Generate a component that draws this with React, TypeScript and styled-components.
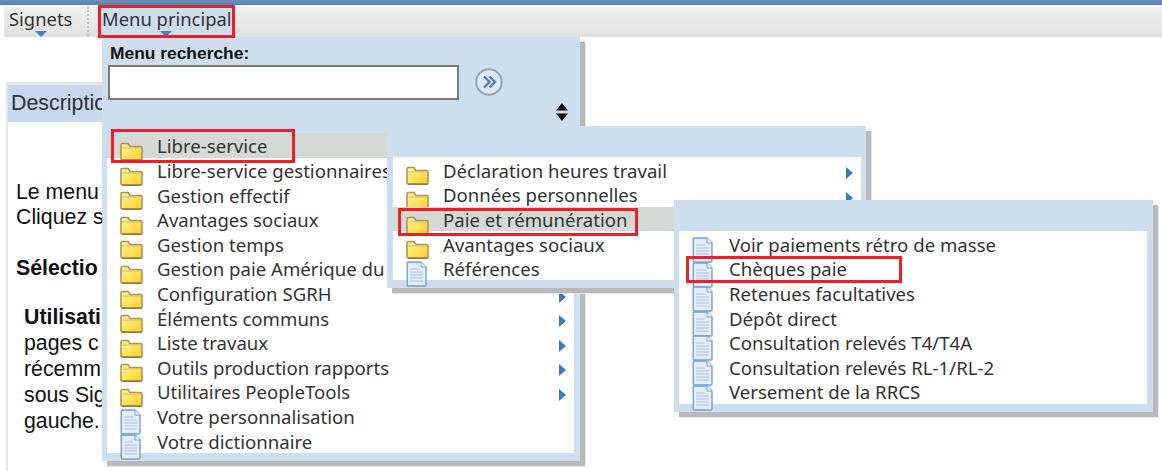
import React from "react";
import styled, { createGlobalStyle } from "styled-components";

const Global = createGlobalStyle`
  html, body { margin: 0; padding: 0; background: #fff; }
  body { font-family: "Liberation Sans", Arial, sans-serif; color: #222; }
`;

const Page = styled.div`
  position: relative;
  width: 1162px;
  height: 471px;
  overflow: hidden;
  background: #fff;
`;
const TopBar = styled.div`
  height: 5px;
  background: linear-gradient(#6b90ba, #5c82ad);
  border-bottom: 1px solid #fff;
`;
const Toolbar = styled.nav`
  display: flex;
  align-items: stretch;
  height: 31px;
  margin-left: 4px;
  background: linear-gradient(#f0f0f0, #e0e0e0);
  font-family: "Noto Sans", sans-serif;
  font-size: 18.4px;
  color: #333;
`;
const ToolItem = styled.div<{ $active?: boolean; $w: number; $pad: number; $ax: number }>`
  position: relative;
  box-sizing: border-box;
  width: ${(p) => p.$w}px;
  padding: 0 0 0 ${(p) => p.$pad}px;
  line-height: 26px;
  white-space: nowrap;
  background: ${(p) => (p.$active ? "#cddeee" : "transparent")};
  &::after {
    content: "";
    position: absolute;
    left: ${(p) => p.$ax}px;
    bottom: 0;
    border-left: 6px solid transparent;
    border-right: 6px solid transparent;
    border-top: 6px solid #4a82c0;
  }
`;
const ToolSep = styled.div`
  width: 0;
  margin: 1px 11px 1px 0;
  border-left: 2px dotted #c4c4c4;
`;
const Card = styled.section`
  box-sizing: border-box;
  width: 96px;
  height: 389px;
  margin: 45px 0 0 6px;
  overflow: hidden;
  border-left: 2px solid #e6e6e6;
  border-top: 3px solid #e6e6e6;
`;
const CardHead = styled.h2`
  margin: 0;
  height: 37px;
  padding-left: 3px;
  background: #c6d9ee;
  font-weight: 400;
  font-size: 21.4px;
  line-height: 37px;
  color: #333;
  white-space: nowrap;
`;
const CardBody = styled.div`
  padding: 58px 0 0 8px;
  font-size: 21.3px;
  line-height: 25px;
  color: #111;
  white-space: nowrap;
`;
const Para = styled.p<{ $gap?: number }>`
  margin: 0 0 ${(p) => p.$gap ?? 0}px;
`;
const ParaGroup = styled.div`
  margin: 0 0 0 8px;
  line-height: 26px;
`;
const Panel = styled.div<{ $l: number; $t: number; $w: number; $h: number; $pl: number; $pr: number }>`
  position: absolute;
  left: ${(p) => p.$l}px;
  top: ${(p) => p.$t}px;
  width: ${(p) => p.$w}px;
  height: ${(p) => p.$h}px;
  box-sizing: border-box;
  display: flex;
  flex-direction: column;
  padding: 0 ${(p) => p.$pr}px 8px ${(p) => p.$pl}px;
  background: #cddeee;
  box-shadow: 5px 5px 0 #b9b9b9, 6px 6px 0 #e6e6e6;
`;
const SearchHead = styled.div`
  position: relative;
  height: 96px;
  flex: none;
`;
const SearchLabel = styled.label`
  display: block;
  padding: 7px 0 0 3px;
  font-weight: 700;
  font-size: 17.4px;
  line-height: 18px;
  color: #111;
`;
const SearchRow = styled.div`
  display: flex;
  align-items: center;
  gap: 16px;
  margin: 3px 0 0 1px;
`;
const SearchInput = styled.div`
  box-sizing: border-box;
  width: 351px;
  height: 35px;
  background: #fff;
  border: 2px solid #7a7a7a;
`;
const GoButton = styled.div`
  width: 28px;
  height: 28px;
  flex: none;
  line-height: 0;
  margin-top: -2px;
`;
const SortIcon = styled.div`
  position: absolute;
  left: 449px;
  top: 66px;
  width: 12px;
  height: 18px;
  line-height: 0;
`;
const SpacerHead = styled.div`
  height: 31px;
  flex: none;
`;
const List = styled.ul<{ $pt: number }>`
  flex: 1;
  margin: 0;
  padding: ${(p) => p.$pt}px 0 0;
  list-style: none;
  background: #fff;
  font-family: "Noto Sans", sans-serif;
  font-size: 18.6px;
  color: #333;
`;
const Row = styled.li<{ $on?: boolean; $tx: number }>`
  position: relative;
  box-sizing: border-box;
  display: flex;
  align-items: center;
  height: 24.62px;
  padding: 1px 0 0 ${(p) => p.$tx}px;
  background: ${(p) => (p.$on ? "#d4d9d6" : "transparent")};
  white-space: nowrap;
`;
const IconSlot = styled.span<{ $ix: number; $page?: boolean }>`
  position: absolute;
  left: ${(p) => p.$ix}px;
  top: ${(p) => (p.$page ? 5.5 : 9)}px;
  display: block;
  line-height: 0;
`;
const Arrow = styled.span<{ $r: number }>`
  position: absolute;
  right: ${(p) => p.$r}px;
  top: 10px;
  width: 0;
  height: 0;
  border-left: 7px solid #3d78bd;
  border-top: 6px solid transparent;
  border-bottom: 6px solid transparent;
`;
const RedFrame = styled.div<{ $l: number; $t: number; $w: number; $h: number }>`
  position: absolute;
  left: ${(p) => p.$l}px;
  top: ${(p) => p.$t}px;
  width: ${(p) => p.$w}px;
  height: ${(p) => p.$h}px;
  box-sizing: border-box;
  border: 3px solid #e8202c;
`;

const Folder = () => (
  <svg width="23" height="19" viewBox="0 0 23 19">
    <defs>
      <linearGradient id="fg" x1="0" y1="0" x2="1" y2="1">
        <stop offset="0" stopColor="#fff3a8" />
        <stop offset="0.55" stopColor="#ffe354" />
        <stop offset="1" stopColor="#f8cc30" />
      </linearGradient>
    </defs>
    <path d="M1 17V3q0-1.5 1.5-1.5h5.5L10 4.5h11q1 0 1 1V17q0 1-1 1H2q-1 0-1-1z" fill="url(#fg)" stroke="#b09558" strokeWidth="1.6" />
    <path d="M1.5 6h20" stroke="#cdb272" strokeWidth="0.8" />
    <path d="M2 18.2h20" stroke="#8f7440" strokeWidth="1.4" />
  </svg>
);

const PageIcon = () => (
  <svg width="21" height="26" viewBox="0 0 21 26">
    <path d="M1.2 2.2q0-1.2 1.2-1.2H15l5 5v17.8q0 1.2-1.2 1.2H2.4q-1.2 0-1.2-1.2z" fill="#e6eefb" stroke="#6f9fdc" strokeWidth="1.4" />
    <path d="M15 1v5h5" fill="#fff" stroke="#6f9fdc" strokeWidth="1" />
    <path d="M4 8h9M4 11h13M4 14h13M4 17h13M4 20h13" stroke="#a4c0e8" strokeWidth="1.2" />
  </svg>
);

type Item = { t: string; page?: boolean; on?: boolean; arrow?: boolean };

const menu1: Item[] = [
  { t: "Libre-service", on: true },
  { t: "Libre-service gestionnaires" },
  { t: "Gestion effectif" },
  { t: "Avantages sociaux" },
  { t: "Gestion temps" },
  { t: "Gestion paie Amérique du" },
  { t: "Configuration SGRH", arrow: true },
  { t: "Éléments communs", arrow: true },
  { t: "Liste travaux", arrow: true },
  { t: "Outils production rapports", arrow: true },
  { t: "Utilitaires PeopleTools", arrow: true },
  { t: "Votre personnalisation", page: true },
  { t: "Votre dictionnaire", page: true },
];
const menu2: Item[] = [
  { t: "Déclaration heures travail", arrow: true },
  { t: "Données personnelles", arrow: true },
  { t: "Paie et rémunération", on: true },
  { t: "Avantages sociaux" },
  { t: "Références", page: true },
];
const menu3: Item[] = [
  "Voir paiements rétro de masse",
  "Chèques paie",
  "Retenues facultatives",
  "Dépôt direct",
  "Consultation relevés T4/T4A",
  "Consultation relevés RL-1/RL-2",
  "Versement de la RRCS",
].map((t) => ({ t, page: true }));

const Rows = ({ items, ix, tx, ar }: { items: Item[]; ix: number; tx: number; ar: number }) => (
  <>
    {items.map((it) => (
      <Row key={it.t} $on={it.on} $tx={tx}>
        <IconSlot $ix={ix} $page={it.page}>
          {it.page ? <PageIcon /> : <Folder />}
        </IconSlot>
        {it.t}
        {it.arrow && <Arrow $r={ar} />}
      </Row>
    ))}
  </>
);

export default function App() {
  return (
    <Page>
      <Global />
      <TopBar />
      <Toolbar>
        <ToolItem $w={83} $pad={5} $ax={31}>Signets</ToolItem>
        <ToolSep />
        <ToolItem $active $w={132} $pad={2} $ax={60}>Menu principal</ToolItem>
      </Toolbar>
      <Card>
        <CardHead>Descriptio</CardHead>
        <CardBody>
          <Para>Le menu</Para>
          <Para $gap={26}>Cliquez s</Para>
          <Para $gap={23}><b>Sélectio</b></Para>
          <ParaGroup>
            <Para><b>Utilisati</b></Para>
            <Para>pages c</Para>
            <Para>récemm</Para>
            <Para>sous Sig</Para>
            <Para>gauche.</Para>
          </ParaGroup>
        </CardBody>
      </Card>

      <Panel $l={102} $t={37} $w={478} $h={424} $pl={5} $pr={6}>
        <SearchHead>
          <SearchLabel>Menu recherche:</SearchLabel>
          <SearchRow>
            <SearchInput />
            <GoButton>
              <svg width="28" height="28" viewBox="0 0 28 28">
                <circle cx="14" cy="14" r="12.8" fill="#dde8f6" stroke="#98a2b2" strokeWidth="2" />
                <path d="M9 8.5l5.5 5.5-5.5 5.5M14.5 8.5l5.5 5.5-5.5 5.5" fill="none" stroke="#5a75b4" strokeWidth="2.3" />
              </svg>
            </GoButton>
          </SearchRow>
          <SortIcon>
            <svg width="12" height="18" viewBox="0 0 12 18">
              <path d="M6 0L12 7.5H0zM0 10.5h12L6 18z" fill="#111" />
            </svg>
          </SortIcon>
        </SearchHead>
        <List $pt={0}>
          <Rows items={menu1} ix={13} tx={50} ar={8} />
        </List>
      </Panel>

      <Panel $l={387} $t={126} $w={479} $h={162} $pl={6} $pr={5}>
        <SpacerHead />
        <List $pt={0.4}>
          <Rows items={menu2} ix={13} tx={50} ar={8} />
        </List>
      </Panel>

      <Panel $l={674} $t={200} $w={479} $h={212} $pl={5} $pr={6}>
        <SpacerHead />
        <List $pt={0.4}>
          <Rows items={menu3} ix={13} tx={50} ar={8} />
        </List>
      </Panel>

      <RedFrame $l={98} $t={5} $w={137} $h={33} />
      <RedFrame $l={111} $t={129} $w={184} $h={34} />
      <RedFrame $l={398} $t={208} $w={240} $h={28} />
      <RedFrame $l={686} $t={256} $w={216} $h={27} />
    </Page>
  );
}
